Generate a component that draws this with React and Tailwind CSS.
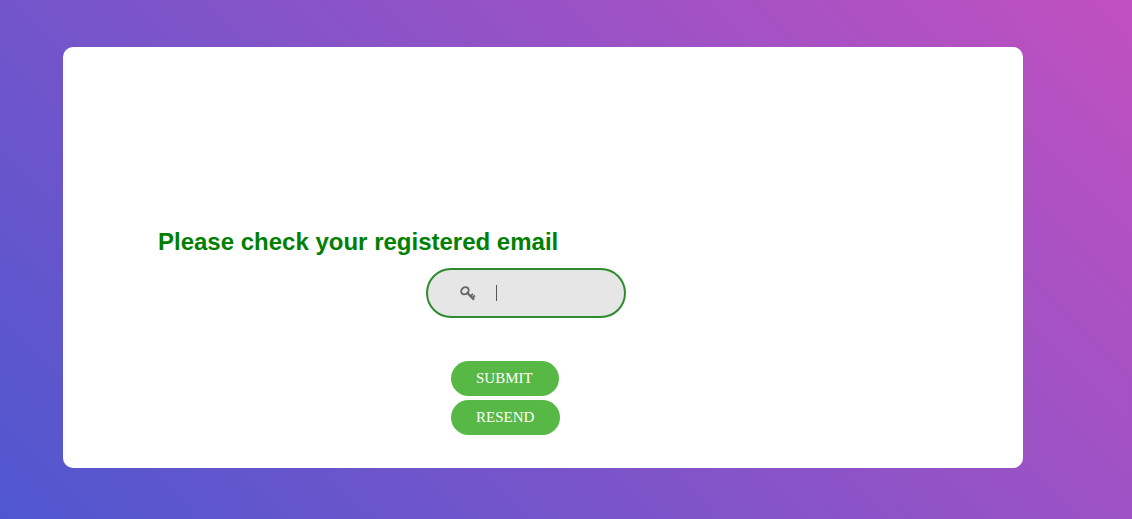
function KeyIcon() {
  return (
    <svg viewBox="0 0 16 15" className="h-[15px] w-4" fill="none" stroke="#666666" aria-hidden="true">
      <ellipse cx="4.9" cy="4.8" rx="4" ry="3.3" strokeWidth="1.9" transform="rotate(-40 4.9 4.8)" />
      <path d="M7.4 7 L14 13.6" strokeWidth="2.3" />
      <path d="M10.6 10.2 L13 7.8 M12.4 12 L14.9 9.5" strokeWidth="1.8" />
    </svg>
  );
}

function PillButton({ type, children }) {
  return (
    <button
      type={type}
      className="h-[35px] rounded-full bg-[#57b846] pr-[26px] pb-0.5 pl-[25px] font-['Liberation_Serif',serif] text-[15px] leading-5 text-white hover:bg-[#333333]"
    >
      {children}
    </button>
  );
}

export default function App() {
  return (
    <main className="min-h-screen bg-linear-[45deg,#4f57cf,#c150c0] px-[63px] pt-[47px] pb-[51px]">
      <form
        className="max-w-[960px] rounded-[10px] bg-white pt-[181px] pb-[33px] pl-[95px]"
        onSubmit={(event) => event.preventDefault()}
      >
        <h1 className="font-['Liberation_Sans',sans-serif] text-2xl leading-7 font-bold text-[#008000]">
          <label htmlFor="code">Please check your registered email</label>
        </h1>
        <div className="relative mt-3 ml-[268px] w-[200px]">
          <input
            id="code"
            type="text"
            autoComplete="off"
            className="block h-[50px] w-full rounded-full border-2 border-[#2e8b2e] bg-[#e6e6e6] pr-[30px] pl-[68px] font-['Liberation_Sans',sans-serif] text-[15px] text-[#666666] caret-transparent outline-none"
          />
          <span className="pointer-events-none absolute inset-y-0 left-[34px] flex items-center gap-5">
            <KeyIcon />
            <span className="h-4 w-px bg-[#555555]" />
          </span>
        </div>
        <div className="mt-[43px] ml-[293px] flex flex-col items-start gap-1">
          <PillButton type="submit">SUBMIT</PillButton>
          <PillButton type="button">RESEND</PillButton>
        </div>
      </form>
    </main>
  );
}
